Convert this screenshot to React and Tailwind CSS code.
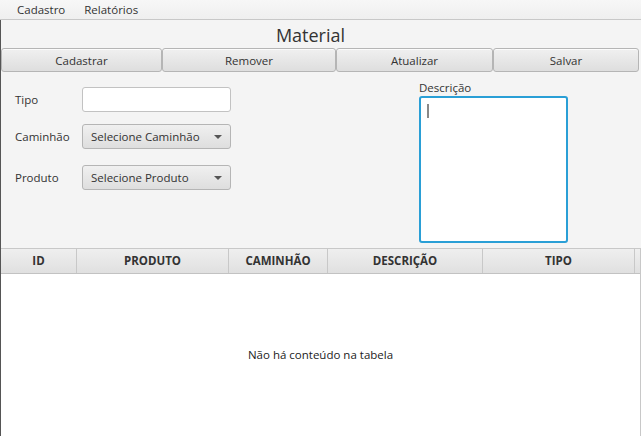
export default function App() {
  const font = { fontFamily: '"Open Sans", "Noto Sans", sans-serif' };
  const btn =
    "h-[24px] flex items-center justify-center rounded-[3px] border border-[#b5b5b5] bg-gradient-to-b from-[#f0f0f0] to-[#dedede] text-[11.5px] text-[#333] pt-[1px] shadow-[inset_0_1px_0_#fbfbfb]";
  const cols = [
    ["ID", "w-[76px]"],
    ["PRODUTO", "w-[152px]"],
    ["CAMINHÃO", "w-[99px]"],
    ["DESCRIÇÃO", "w-[155px]"],
    ["TIPO", "w-[152px]"],
  ];
  return (
    <div className="w-[641px] h-[436px] bg-[#f4f4f4] flex flex-col overflow-hidden text-[#333]" style={font}>
      <div className="h-[20px] shrink-0 flex items-center border-b border-[#c8c8c8] bg-gradient-to-b from-[#f7f7f7] to-[#efefef] text-[11.5px] text-[#333]">
        <span className="ml-[17px]">Cadastro</span>
        <span className="ml-[19px]">Relatórios</span>
      </div>
      <div className="flex-1 flex flex-col border-l border-[#555] min-h-0">
        <div className="h-[28px] flex items-center justify-center pr-[21px] text-[18px] text-[#333] leading-none pt-[1px]">Material</div>
        <div className="flex pr-[2px] h-[25px]">
          <div className={btn + " w-[161px]"}>Cadastrar</div>
          <div className={btn + " w-[174px]"}>Remover</div>
          <div className={btn + " w-[157px]"}>Atualizar</div>
          <div className={btn + " w-[146px]"}>Salvar</div>
        </div>
        <div className="h-[175px] flex text-[11.5px]">
          <div className="w-[418px] flex flex-col pt-[14px]">
            <div className="flex items-center h-[25px]">
              <span className="w-[81px] pl-[14px]">Tipo</span>
              <div className="w-[149px] h-[25px] bg-white border border-[#c2c2c2] rounded-[3px]"></div>
            </div>
            <div className="flex items-center h-[25px] mt-[12px]">
              <span className="w-[81px] pl-[14px]">Caminhão</span>
              <div className="w-[149px] h-[25px] flex items-center justify-between pl-[8px] pr-[8px] border border-[#b5b5b5] rounded-[3px] bg-gradient-to-b from-[#f0f0f0] to-[#dedede]">
                <span>Selecione Caminhão</span>
                <svg width="8" height="4" viewBox="0 0 8 4"><path d="M0 0h8L4 4z" fill="#555" /></svg>
              </div>
            </div>
            <div className="flex items-center h-[25px] mt-[16px]">
              <span className="w-[81px] pl-[14px]">Produto</span>
              <div className="w-[149px] h-[25px] flex items-center justify-between pl-[8px] pr-[8px] border border-[#b5b5b5] rounded-[3px] bg-gradient-to-b from-[#f0f0f0] to-[#dedede]">
                <span>Selecione Produto</span>
                <svg width="8" height="4" viewBox="0 0 8 4"><path d="M0 0h8L4 4z" fill="#555" /></svg>
              </div>
            </div>
          </div>
          <div className="flex flex-col pt-[7px]">
            <span className="leading-[15px] ml-[0px]">Descrição</span>
            <div className="w-[149px] h-[147px] mt-[1px] bg-white border-[2px] border-[#2a9fd6] rounded-[3px] p-[6px]">
              <div className="w-[2px] h-[14px] bg-[#888]"></div>
            </div>
          </div>
        </div>
        <div className="flex-1 flex flex-col border-t border-[#c8c8c8] bg-white border-r border-[#b0b0b0] mr-0 min-h-0">
          <div className="h-[25px] flex shrink-0 bg-gradient-to-b from-[#efefef] to-[#e0e0e0] border-b border-[#c2c2c2] text-[11.5px] font-bold text-[#333]">
            {cols.map(([t, w]) => (
              <div key={t} className={w + " flex items-center justify-center border-r border-[#c8c8c8]"}>{t}</div>
            ))}
            <div className="flex-1"></div>
          </div>
          <div className="flex-1 flex items-center justify-center text-[11.5px] text-[#222]">
            Não há conteúdo na tabela
          </div>
        </div>
      </div>
    </div>
  );
}
